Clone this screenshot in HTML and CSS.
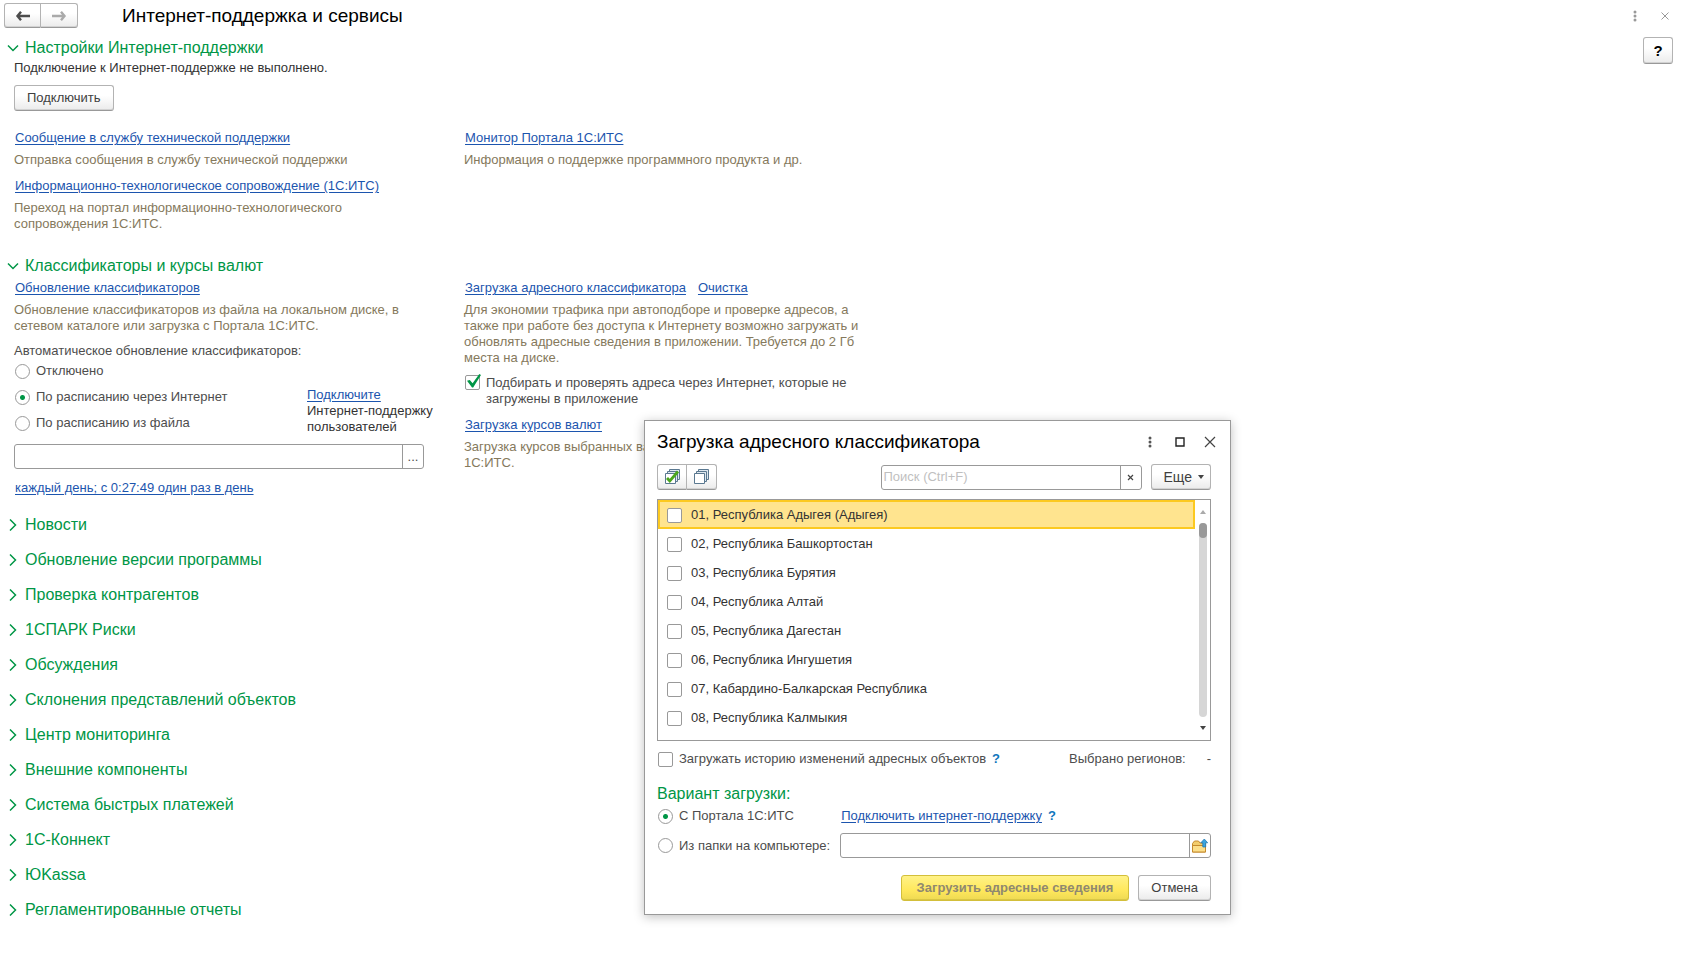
FILE: index.html
```html
<!DOCTYPE html>
<html lang="ru">
<head>
<meta charset="utf-8">
<title>Интернет-поддержка и сервисы</title>
<link rel="stylesheet" href="styles.css">
</head>
<body>
<header class="page-head">
  <div class="btn-group">
    <button class="btn nav-btn" aria-label="Назад"><svg width="16" height="12" viewBox="0 0 16 12"><path class="ink-dark" d="M6 1.800 2.500 6 6 10.200M2.500 6H15"/></svg></button>
    <button class="btn nav-btn" aria-label="Вперед"><svg width="16" height="12" viewBox="0 0 16 12"><path class="ink-light" d="M10 1.800 13.500 6 10 10.200M13.500 6H1"/></svg></button>
  </div>
  <h1 class="page-title">Интернет-поддержка и сервисы</h1>
  <div class="page-tools">
    <button class="icon-btn" aria-label="Меню"><svg width="4" height="12" viewBox="0 0 4 12" fill="#999"><circle cx="2" cy="2" r="1.500"/><circle cx="2" cy="6" r="1.500"/><circle cx="2" cy="10" r="1.500"/></svg></button>
    <button class="icon-btn" aria-label="Закрыть"><svg width="8" height="8" viewBox="0 0 8 8"><path d="M.5.5l7 7M7.500.5l-7 7" stroke="#999" fill="none"/></svg></button>
  </div>
</header>
<main class="page">
  <button class="btn help-btn">?</button>

  <section>
    <h2><button class="section-toggle open"><svg class="chevron" width="12" height="12" viewBox="0 0 12 12"><path d="M1 3.500l5 5 5-5"/></svg>Настройки Интернет-поддержки</button></h2>
    <div class="section-body">
      <p class="strong-text">Подключение к Интернет-поддержке не выполнено.</p>
      <button class="btn connect-btn">Подключить</button>
      <div class="columns">
        <div class="link-list">
          <a href="#">Сообщение в службу технической поддержки</a>
          <p class="note">Отправка сообщения в службу технической поддержки</p>
          <a href="#">Информационно-технологическое сопровождение (1С:ИТС)</a>
          <p class="note">Переход на портал информационно-технологического сопровождения 1С:ИТС.</p>
        </div>
        <div class="link-list">
          <a href="#">Монитор Портала 1С:ИТС</a>
          <p class="note">Информация о поддержке программного продукта и др.</p>
        </div>
      </div>
    </div>
  </section>

  <section class="section-classifiers">
    <h2><button class="section-toggle open"><svg class="chevron" width="12" height="12" viewBox="0 0 12 12"><path d="M1 3.500l5 5 5-5"/></svg>Классификаторы и курсы валют</button></h2>
    <div class="section-body columns columns-tight">
      <div class="link-list">
        <a href="#">Обновление классификаторов</a>
        <p class="note">Обновление классификаторов из файла на локальном диске, в сетевом каталоге или загрузка с Портала 1С:ИТС.</p>
        <div class="schedule">
          <fieldset class="radio-list">
            <legend>Автоматическое обновление классификаторов:</legend>
            <label class="choice"><input type="radio" name="update">Отключено</label>
            <label class="choice"><input type="radio" name="update" checked>По расписанию через Интернет</label>
            <label class="choice"><input type="radio" name="update">По расписанию из файла</label>
          </fieldset>
          <p class="schedule-hint"><a href="#">Подключите</a><br>Интернет-поддержку<br>пользователей</p>
        </div>
        <div class="field file-field"><input type="text" aria-label="Файл классификаторов"><button aria-label="Выбрать файл">...</button></div>
        <a href="#">каждый день; с 0:27:49 один раз в день</a>
      </div>
      <div class="link-list">
        <div class="link-row"><a href="#">Загрузка адресного классификатора</a><a href="#">Очистка</a></div>
        <p class="note">Для экономии трафика при автоподборе и проверке адресов, а также при работе без доступа к Интернету возможно загружать и обновлять адресные сведения в приложении. Требуется до 2 Гб места на диске.</p>
        <label class="choice choice-top"><input type="checkbox" checked><span>Подбирать и проверять адреса через Интернет, которые не загружены в приложение</span></label>
        <a href="#">Загрузка курсов валют</a>
        <p class="note">Загрузка курсов выбранных валют с Портала<br>1С:ИТС.</p>
      </div>
    </div>
  </section>

  <div class="closed-sections">
    <h2><button class="section-toggle"><svg class="chevron" width="12" height="12" viewBox="0 0 12 12"><path d="M3 .5 8.500 6 3 11.500"/></svg>Новости</button></h2>
    <h2><button class="section-toggle"><svg class="chevron" width="12" height="12" viewBox="0 0 12 12"><path d="M3 .5 8.500 6 3 11.500"/></svg>Обновление версии программы</button></h2>
    <h2><button class="section-toggle"><svg class="chevron" width="12" height="12" viewBox="0 0 12 12"><path d="M3 .5 8.500 6 3 11.500"/></svg>Проверка контрагентов</button></h2>
    <h2><button class="section-toggle"><svg class="chevron" width="12" height="12" viewBox="0 0 12 12"><path d="M3 .5 8.500 6 3 11.500"/></svg>1СПАРК Риски</button></h2>
    <h2><button class="section-toggle"><svg class="chevron" width="12" height="12" viewBox="0 0 12 12"><path d="M3 .5 8.500 6 3 11.500"/></svg>Обсуждения</button></h2>
    <h2><button class="section-toggle"><svg class="chevron" width="12" height="12" viewBox="0 0 12 12"><path d="M3 .5 8.500 6 3 11.500"/></svg>Склонения представлений объектов</button></h2>
    <h2><button class="section-toggle"><svg class="chevron" width="12" height="12" viewBox="0 0 12 12"><path d="M3 .5 8.500 6 3 11.500"/></svg>Центр мониторинга</button></h2>
    <h2><button class="section-toggle"><svg class="chevron" width="12" height="12" viewBox="0 0 12 12"><path d="M3 .5 8.500 6 3 11.500"/></svg>Внешние компоненты</button></h2>
    <h2><button class="section-toggle"><svg class="chevron" width="12" height="12" viewBox="0 0 12 12"><path d="M3 .5 8.500 6 3 11.500"/></svg>Система быстрых платежей</button></h2>
    <h2><button class="section-toggle"><svg class="chevron" width="12" height="12" viewBox="0 0 12 12"><path d="M3 .5 8.500 6 3 11.500"/></svg>1С-Коннект</button></h2>
    <h2><button class="section-toggle"><svg class="chevron" width="12" height="12" viewBox="0 0 12 12"><path d="M3 .5 8.500 6 3 11.500"/></svg>ЮKassa</button></h2>
    <h2><button class="section-toggle"><svg class="chevron" width="12" height="12" viewBox="0 0 12 12"><path d="M3 .5 8.500 6 3 11.500"/></svg>Регламентированные отчеты</button></h2>
  </div>
</main>

<div class="dialog" role="dialog" aria-labelledby="dialog-title">
  <header class="dialog-head">
    <h2 class="dialog-title" id="dialog-title">Загрузка адресного классификатора</h2>
    <div class="dialog-tools">
      <button class="icon-btn" aria-label="Меню"><svg width="4" height="12" viewBox="0 0 4 12" fill="#555"><circle cx="2" cy="2" r="1.500"/><circle cx="2" cy="6" r="1.500"/><circle cx="2" cy="10" r="1.500"/></svg></button>
      <button class="icon-btn" aria-label="Развернуть"><svg width="10" height="10" viewBox="0 0 10 10"><path d="M1 1h8v8H1z" stroke="#222" stroke-width="1.400" fill="none"/></svg></button>
      <button class="icon-btn" aria-label="Закрыть"><svg width="12" height="12" viewBox="0 0 12 12"><path d="M1 1l10 10M11 1 1 11" stroke="#444" stroke-width="1.200" fill="none"/></svg></button>
    </div>
  </header>
  <div class="toolbar">
    <div class="btn-group">
      <button class="btn tool-btn" aria-label="Установить флажки"><svg width="17" height="16" viewBox="0 0 17 16"><g fill="#dfe8ef" stroke="#5a7890"><path d="M5.500.5h10v10h-10z"/><path d="M3.500 2.500h10v10h-10z"/><path fill="#fff" d="M1.500 4.500h10v10h-10z"/></g><path d="M3 9l2.800 3L14 2.500" fill="none" stroke="#4aa61c" stroke-width="2.800"/></svg></button>
      <button class="btn tool-btn" aria-label="Снять флажки"><svg width="17" height="16" viewBox="0 0 17 16"><g fill="#dfe8ef" stroke="#5a7890"><path d="M5.500.5h10v10h-10z"/><path d="M3.500 2.500h10v10h-10z"/><path fill="#fff" d="M1.500 4.500h10v10h-10z"/></g></svg></button>
    </div>
    <div class="field search-field"><input type="text" placeholder="Поиск (Ctrl+F)" aria-label="Поиск"><button aria-label="Очистить"><svg width="7" height="7" viewBox="0 0 7 7"><path d="M1 1l5 5M6 1 1 6" stroke="#444" stroke-width="1.200" fill="none"/></svg></button></div>
    <button class="btn more-btn">Еще<svg width="6" height="4" viewBox="0 0 6 4"><path d="M0 0h6L3 4z" fill="#444"/></svg></button>
  </div>
  <div class="region-box">
    <ul class="region-list">
      <li class="selected"><label class="choice"><input type="checkbox">01, Республика Адыгея (Адыгея)</label></li>
      <li><label class="choice"><input type="checkbox">02, Республика Башкортостан</label></li>
      <li><label class="choice"><input type="checkbox">03, Республика Бурятия</label></li>
      <li><label class="choice"><input type="checkbox">04, Республика Алтай</label></li>
      <li><label class="choice"><input type="checkbox">05, Республика Дагестан</label></li>
      <li><label class="choice"><input type="checkbox">06, Республика Ингушетия</label></li>
      <li><label class="choice"><input type="checkbox">07, Кабардино-Балкарская Республика</label></li>
      <li><label class="choice"><input type="checkbox">08, Республика Калмыкия</label></li>
    </ul>
    <div class="scrollbar">
      <svg width="6" height="4" viewBox="0 0 6 4"><path d="M0 4h6L3 0z" fill="#aaa"/></svg>
      <div class="track"><div class="thumb"></div></div>
      <svg width="6" height="4" viewBox="0 0 6 4"><path d="M0 0h6L3 4z" fill="#444"/></svg>
    </div>
  </div>
  <div class="history-row">
    <label class="choice"><input type="checkbox">Загружать историю изменений адресных объектов</label>
    <button class="hint">?</button>
    <span class="picked">Выбрано регионов:</span><span>-</span>
  </div>
  <h3 class="variant-title">Вариант загрузки:</h3>
  <div class="variants">
    <label class="choice"><input type="radio" name="source" checked>С Портала 1С:ИТС</label>
    <div class="variant-side"><a href="#">Подключить интернет-поддержку</a><button class="hint">?</button></div>
    <label class="choice"><input type="radio" name="source">Из папки на компьютере:</label>
    <div class="field folder-field"><input type="text" aria-label="Папка на компьютере"><button aria-label="Выбрать папку"><svg width="16" height="16" viewBox="0 0 16 16"><path d="M.5 14V5.500L2.500 3h4L8 5h5.500v9z" fill="#f3cd6c" stroke="#c58a2c"/><path d="M.5 7.500h13V14H.5z" fill="#fcdf8a" stroke="#c58a2c"/><path d="M10.800 9V4.800H8.800L12.300 1l3.400 3.800h-2V9z" fill="#3aa5e0" stroke="#1c74ad" stroke-width=".7"/></svg></button></div>
  </div>
  <footer class="dialog-foot">
    <button class="btn primary-btn">Загрузить адресные сведения</button>
    <button class="btn">Отмена</button>
  </footer>
</div>
</body>
</html>
```
FILE: styles.css
```css
* { box-sizing: border-box; }
body {
  margin: 0;
  background: #fff;
  color: #4d4d4d;
  font: 13px/16px "Liberation Sans", Arial, sans-serif;
}
h1, h2, h3, p, ul, fieldset, legend { margin: 0; padding: 0; border: 0; font-weight: normal; }
button, input { font: inherit; color: inherit; }
button { padding: 0; border: 0; background: none; }
svg { display: block; flex: none; }
a { color: #1c55ae; text-underline-offset: 2px; }

.btn {
  height: 26px;
  padding: 0 12px;
  border: 1px solid #b3b3b3;
  border-bottom-color: #999;
  border-radius: 3px;
  background: linear-gradient(#fff 40%, #ebebeb);
  box-shadow: inset 0 -1px #d2d2d2;
  color: #404040;
}
.btn-group { display: flex; }
.btn-group .btn { display: flex; align-items: center; justify-content: center; padding: 0; }
.btn-group .btn:first-child { border-radius: 3px 0 0 3px; }
.btn-group .btn:last-child { border-left: 0; border-radius: 0 3px 3px 0; }
.icon-btn { display: flex; align-items: center; justify-content: center; width: 30px; height: 24px; }

.page-head { display: flex; align-items: center; height: 31px; padding: 0 12px 0 4px; }
.nav-btn { width: 37px; height: 25px; }
.nav-btn path { fill: none; stroke-width: 2.400; }
.ink-dark { stroke: #4d4d4d; }
.ink-light { stroke: #aaa; }
.page-title { margin-left: 44px; color: #000; font-size: 19px; line-height: 24px; }
.page-tools { display: flex; margin-left: auto; }

.page { position: relative; padding: 3px 0 24px 7px; }
.help-btn { position: absolute; top: 6px; right: 19px; width: 30px; height: 27px; padding: 0; color: #000; font-size: 15px; font-weight: bold; }

.section-toggle { display: flex; align-items: center; gap: 6px; color: #009646; font-size: 16px; line-height: 27px; }
.chevron { fill: none; stroke: #009646; stroke-width: 1.500; }
.section-body { padding-left: 7px; }
.strong-text { color: #333; line-height: 14px; }
.connect-btn { display: block; margin-top: 10px; }
.columns { display: grid; grid-template-columns: 410px 400px; gap: 40px; padding-top: 18px; }
.section-body.columns-tight { padding-top: 0; }
.link-list > a, .link-row { display: block; width: fit-content; margin-left: 1px; line-height: 18px; }
.link-row { display: flex; gap: 12px; }
.note { max-width: 400px; padding: 5px 0 9px; color: #85795c; }
.section-classifiers { padding-top: 11px; }
.closed-sections { display: grid; gap: 8px; padding-top: 14px; }

.choice { display: flex; align-items: center; gap: 6px; }
.choice-top { align-items: flex-start; padding-bottom: 9px; }
.choice input { position: relative; flex: none; width: 15px; height: 15px; margin: 0 0 0 1px; appearance: none; border: 1px solid #999; border-radius: 2px; background: #fff; }
.choice input[type="radio"] { border-radius: 50%; }
.choice input[type="radio"]:checked { background: radial-gradient(circle, #009646 2px, #fff 3px); }
.choice input[type="checkbox"]:checked::before {
  content: "";
  position: absolute;
  inset: -2px -2px 1px 1px;
  background: #009646;
  clip-path: polygon(0 48%, 20% 42%, 40% 66%, 88% 0, 100% 8%, 44% 96%, 36% 96%);
}

.schedule { display: grid; grid-template-columns: 293px auto; padding-bottom: 9px; }
.radio-list { display: grid; gap: 10px; padding-bottom: 4px; }
.radio-list legend { padding-bottom: 4px; }
.schedule-hint { align-self: end; color: #333; white-space: nowrap; }
.field { display: flex; height: 25px; border: 1px solid #999; border-radius: 3px; background: #fff; }
.field input { flex: 1; min-width: 0; padding: 0 2px; border: 0; background: none; outline: 0; }
.field input::placeholder { color: #bfbfbf; }
.field button { display: flex; align-items: center; justify-content: center; width: 21px; border-left: 1px solid #999; }
.file-field { margin-bottom: 10px; }

.dialog {
  position: absolute;
  top: 420px;
  left: 644px;
  width: 587px;
  padding: 9px 19px 13px 12px;
  border: 1px solid #999;
  background: #fff;
  box-shadow: 0 2px 10px rgba(0, 0, 0, .25);
}
.dialog-head { display: flex; align-items: center; justify-content: space-between; }
.dialog-title { color: #000; font-size: 19px; line-height: 24px; }
.dialog-tools { display: flex; margin-right: -14px; }
.toolbar { display: flex; align-items: center; padding-top: 10px; }
.tool-btn { width: 30px; }
.search-field { width: 261px; margin: 0 9px 0 auto; }
.more-btn { display: flex; align-items: center; gap: 6px; padding: 0 6px 0 12px; font-size: 14px; }
.region-box { display: flex; height: 242px; margin-top: 9px; border: 1px solid #999; }
.region-list { flex: 1; list-style: none; }
.region-list li { height: 29px; padding: 5px 6px; border: 2px solid transparent; color: #333; }
.region-list .selected { border-color: #fcc920; background: #ffe48f; }
.region-list .choice { gap: 9px; }
.scrollbar { display: flex; flex-direction: column; align-items: center; gap: 9px; width: 15px; padding: 10px 0; }
.track { flex: 1; width: 8px; border-radius: 4px; background: #d6d6d6; }
.thumb { height: 15px; border-radius: 4px; background: #999; }
.history-row { display: flex; align-items: center; padding-top: 10px; }
.hint { margin-left: 6px; color: #0f76bd; font-weight: bold; }
.picked { margin: 0 21px 0 auto; }
.variant-title { padding: 15px 0 2px; color: #009646; font-size: 16px; line-height: 24px; }
.variants { display: grid; grid-template-columns: auto 1fr; align-items: center; gap: 9px 10px; }
.variant-side { display: flex; align-items: center; padding-left: 1px; }
.dialog-foot { display: flex; justify-content: flex-end; gap: 9px; padding-top: 17px; }
.primary-btn { padding: 0 15px; border-color: #d3bf3a; background: linear-gradient(#fff287, #ffe85c 60%, #eed952); box-shadow: inset 0 -1px #d9c645; color: #8f8870; font-weight: bold; }
```
